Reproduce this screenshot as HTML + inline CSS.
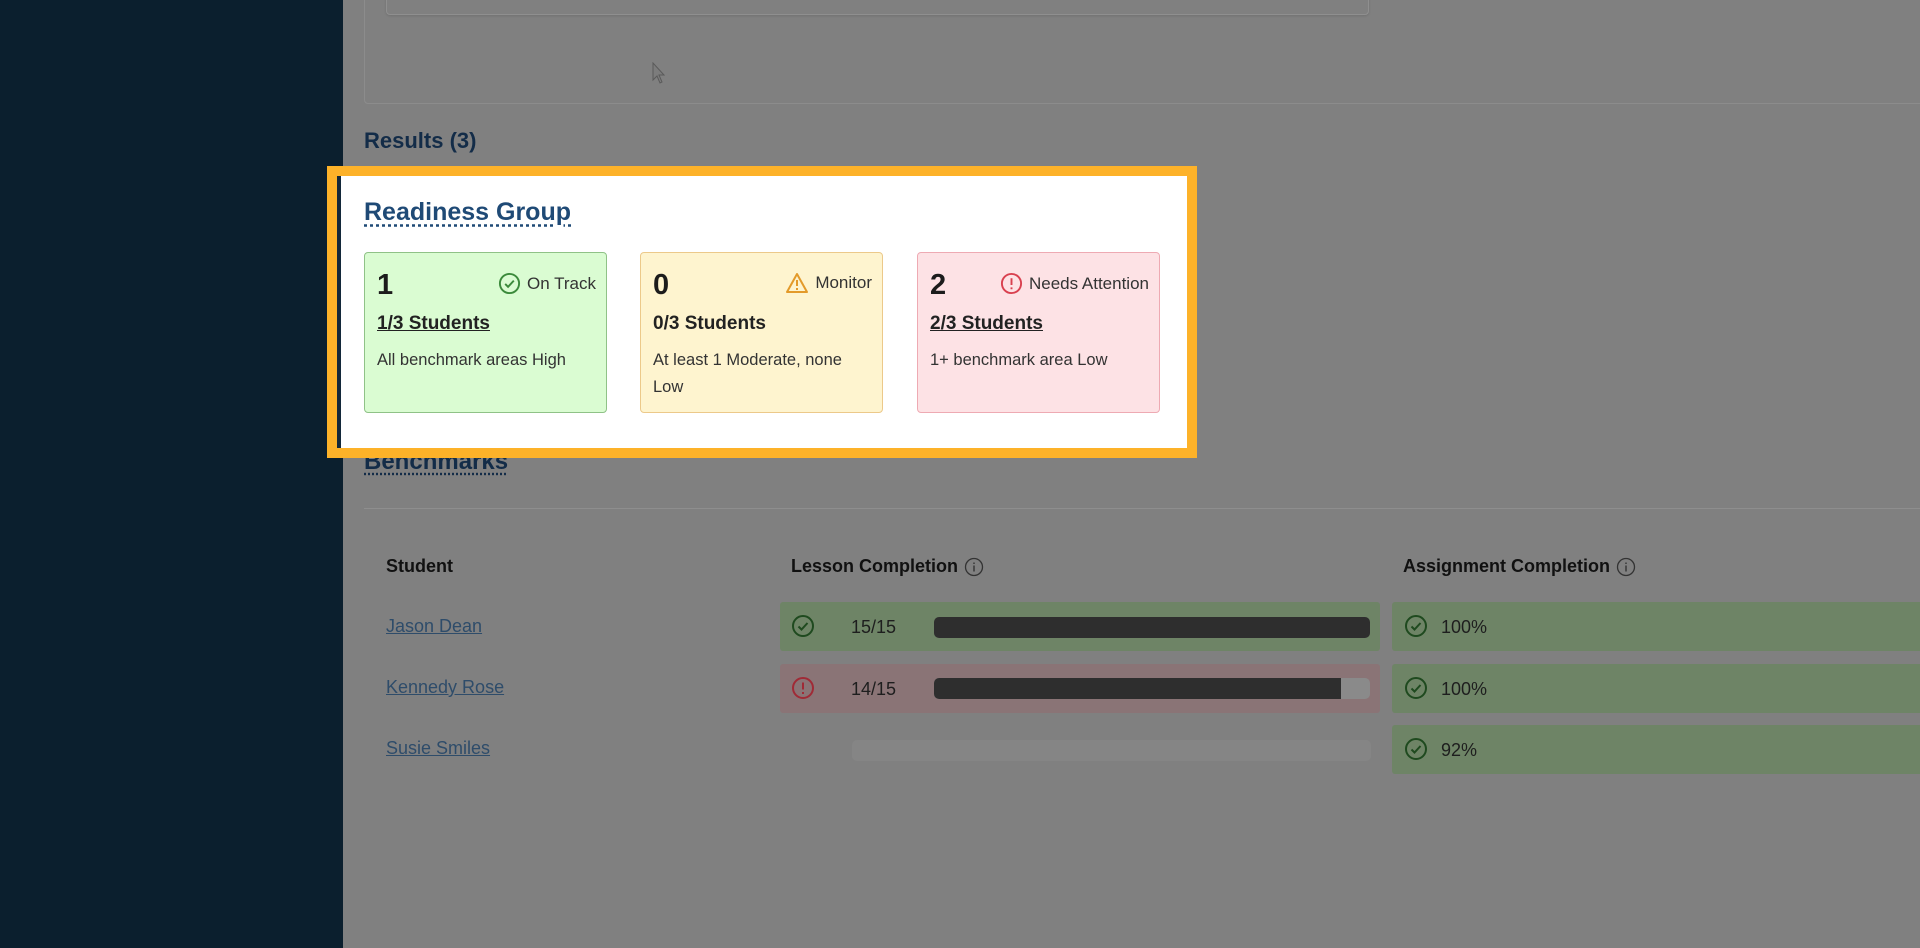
<!DOCTYPE html>
<html><head><meta charset="utf-8"><style>
*{box-sizing:border-box;margin:0;padding:0}
body{width:1920px;height:948px;overflow:hidden;background:#808080;font-family:"Liberation Sans",sans-serif;position:relative}
.side{position:absolute;left:0;top:0;width:343px;height:948px;background:#0b1f2e}
.abs{position:absolute}
.card{position:absolute;top:252px;width:243px;height:161px;border-radius:4px;border:1.5px solid;padding:0 12px}
.num{position:absolute;left:12px;top:16px;font-size:29px;font-weight:bold;color:#1c1c1c}
.st{position:absolute;right:10px;top:19px;font-size:17px;color:#333;display:flex;align-items:center;gap:6px}
.stu{position:absolute;left:12px;top:60px;font-size:19px;font-weight:bold;color:#222}
.desc{position:absolute;left:12px;top:94px;font-size:16.5px;color:#333;line-height:27px;width:225px}
.th{position:absolute;top:556px;font-size:18px;font-weight:bold;color:#111;display:flex;align-items:center;gap:6px}
.name{position:absolute;left:386px;font-size:18px;color:#2e4c6a;text-decoration:underline}
.cell{position:absolute;height:49px;border-radius:3px}
.txt{position:absolute;font-size:18px;color:#1e1e1e}
</style></head><body>
<div class="side"></div>
<div class="abs" style="left:364px;top:-10px;width:1570px;height:114px;border:1px solid #8c8c8c;border-radius:4px"></div>
<div class="abs" style="left:386px;top:-10px;width:983px;height:25px;border:1.5px solid #8f8f8f;border-radius:4px;box-shadow:0 1px 2px #707070"></div>
<svg class="abs" style="left:652px;top:62px" width="16" height="24" viewBox="0 0 16 24"><path d="M1 1 L1 18 L5 14 L8 21 L10 20 L7 13 L12 13 Z" fill="#7c7c7c" stroke="#5a5a5a" stroke-width="1"/></svg>
<div class="abs" style="left:364px;top:128px;font-size:22px;font-weight:bold;color:#132c48">Results (3)</div>
<div class="abs" style="left:364px;top:448px;font-size:24px;font-weight:bold;color:#132c48;text-decoration:underline dotted #132c48;text-underline-offset:4px">Benchmarks</div>
<div class="abs" style="left:364px;top:508px;width:1560px;height:1px;background:#8e8e8e"></div>

<div class="abs" style="left:327px;top:166px;width:870px;height:292px;border:10px solid #fdb229;background:#fff">
 <div class="abs" style="left:0;top:0;width:4px;height:272px;background:#13283a"></div>
 <div class="abs" style="left:27px;top:22px;font-size:25px;font-weight:bold;color:#1f4a76;text-decoration:underline dotted #1f4a76;text-underline-offset:4px">Readiness Group</div>
</div>
<div class="card" style="left:364px;background:#dafcd2;border-color:#8fc287">
 <div class="num">1</div>
 <div class="st"><svg width="23" height="23" viewBox="0 0 24 24"><circle cx="12" cy="12" r="10" fill="none" stroke="#3b8a3b" stroke-width="2"/><path d="M7.5 12.5l3 3 6-6.5" fill="none" stroke="#3b8a3b" stroke-width="2"/></svg>On Track</div>
 <div class="stu" style="text-decoration:underline">1/3 Students</div>
 <div class="desc">All benchmark areas High</div>
</div>
<div class="card" style="left:640px;background:#fef4cf;border-color:#ecc98a">
 <div class="num">0</div>
 <div class="st"><svg width="24" height="22" viewBox="0 0 24 22"><path d="M12 2L22 20H2Z" fill="none" stroke="#e39a2a" stroke-width="2" stroke-linejoin="round"/><path d="M12 8v6M12 16v2" stroke="#e39a2a" stroke-width="2"/></svg>Monitor</div>
 <div class="stu">0/3 Students</div>
 <div class="desc" style="width:205px">At least 1 Moderate, none Low</div>
</div>
<div class="card" style="left:917px;background:#fde2e5;border-color:#eeaab3">
 <div class="num">2</div>
 <div class="st"><svg width="23" height="23" viewBox="0 0 24 24"><circle cx="12" cy="12" r="10" fill="none" stroke="#d9404f" stroke-width="2"/><path d="M12 6.5v7M12 16v2" stroke="#d9404f" stroke-width="2"/></svg>Needs Attention</div>
 <div class="stu" style="text-decoration:underline">2/3 Students</div>
 <div class="desc">1+ benchmark area Low</div>
</div>

<div class="th" style="left:386px">Student</div>
<div class="th" style="left:791px">Lesson Completion <svg width="20" height="20" viewBox="0 0 20 20"><circle cx="10" cy="10" r="8.5" fill="none" stroke="#333" stroke-width="1.3"/><path d="M10 8.5v6M10 5.5v1.5" stroke="#333" stroke-width="1.4"/></svg></div>
<div class="th" style="left:1403px">Assignment Completion <svg width="20" height="20" viewBox="0 0 20 20"><circle cx="10" cy="10" r="8.5" fill="none" stroke="#333" stroke-width="1.3"/><path d="M10 8.5v6M10 5.5v1.5" stroke="#333" stroke-width="1.4"/></svg></div>

<div class="name" style="top:616px">Jason Dean</div>
<div class="name" style="top:677px">Kennedy Rose</div>
<div class="name" style="top:738px">Susie Smiles</div>

<div class="cell" style="left:780px;top:602px;width:600px;background:#6e8466"></div>
<div class="cell" style="left:780px;top:664px;width:600px;background:#8a7476"></div>
<div class="cell" style="left:1392px;top:602px;width:540px;background:#6e8466"></div>
<div class="cell" style="left:1392px;top:664px;width:540px;background:#6e8466"></div>
<div class="cell" style="left:1392px;top:725px;width:540px;background:#6e8466"></div>

<svg class="abs" style="left:791px;top:614px" width="24" height="24" viewBox="0 0 24 24"><circle cx="12" cy="12" r="10" fill="none" stroke="#1f4a1f" stroke-width="2"/><path d="M7.5 12.5l3 3 6-6.5" fill="none" stroke="#1f4a1f" stroke-width="2"/></svg>
<svg class="abs" style="left:791px;top:676px" width="24" height="24" viewBox="0 0 24 24"><circle cx="12" cy="12" r="10" fill="none" stroke="#a02a36" stroke-width="2"/><path d="M12 6.5v7M12 16v2" stroke="#a02a36" stroke-width="2"/></svg>
<div class="txt" style="left:851px;top:617px">15/15</div>
<div class="txt" style="left:851px;top:679px">14/15</div>
<div class="abs" style="left:934px;top:617px;width:436px;height:21px;border-radius:5px;background:#2e2e2e"></div>
<div class="abs" style="left:934px;top:678px;width:436px;height:21px;border-radius:5px;background:#8a8a8a"></div>
<div class="abs" style="left:934px;top:678px;width:407px;height:21px;border-radius:5px 0 0 5px;background:#2e2e2e"></div>
<div class="abs" style="left:852px;top:740px;width:519px;height:21px;border-radius:5px;background:#858585"></div>

<svg class="abs" style="left:1404px;top:614px" width="24" height="24" viewBox="0 0 24 24"><circle cx="12" cy="12" r="10" fill="none" stroke="#1f4a1f" stroke-width="2"/><path d="M7.5 12.5l3 3 6-6.5" fill="none" stroke="#1f4a1f" stroke-width="2"/></svg>
<svg class="abs" style="left:1404px;top:676px" width="24" height="24" viewBox="0 0 24 24"><circle cx="12" cy="12" r="10" fill="none" stroke="#1f4a1f" stroke-width="2"/><path d="M7.5 12.5l3 3 6-6.5" fill="none" stroke="#1f4a1f" stroke-width="2"/></svg>
<svg class="abs" style="left:1404px;top:737px" width="24" height="24" viewBox="0 0 24 24"><circle cx="12" cy="12" r="10" fill="none" stroke="#1f4a1f" stroke-width="2"/><path d="M7.5 12.5l3 3 6-6.5" fill="none" stroke="#1f4a1f" stroke-width="2"/></svg>
<div class="txt" style="left:1441px;top:617px">100%</div>
<div class="txt" style="left:1441px;top:679px">100%</div>
<div class="txt" style="left:1441px;top:740px">92%</div>
</body></html>
